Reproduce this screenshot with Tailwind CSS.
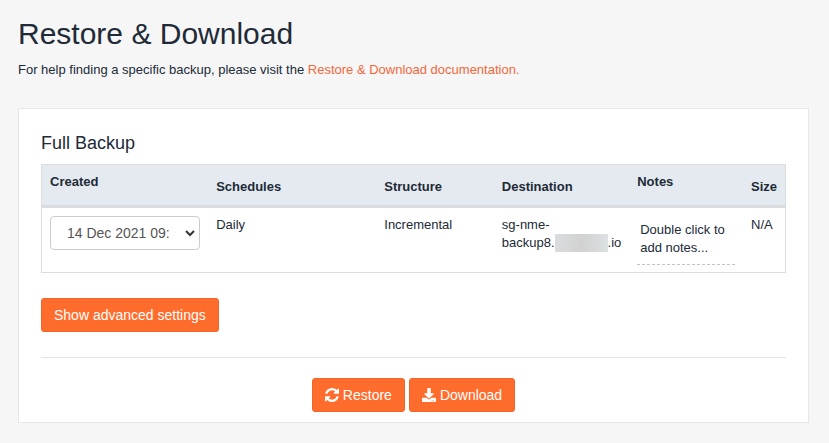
<!doctype html>
<html lang="en">
  <head>
    <meta charset="UTF-8" />
    <meta name="viewport" content="width=device-width, initial-scale=1.0" />
    <script src="https://cdn.jsdelivr.net/npm/@tailwindcss/browser@4"></script>
    <title>Restore &amp; Download</title>
  </head>
  <body
    class="min-h-screen bg-[#f6f6f6] pt-4 pr-5 pb-5 pl-[18px] font-['Liberation_Sans',Arial,sans-serif] text-[13px] leading-[18px] text-[#212a37]"
  >
    <h1 class="text-[30px] leading-9">Restore &amp; Download</h1>
    <p class="mt-[9px]">
      For help finding a specific backup, please visit the
      <a href="#" class="text-[#f4673a] hover:underline"
        >Restore &amp; Download documentation.</a
      >
    </p>

    <main class="mt-[29px] border border-[#e7e7e7] bg-white px-[22px] pt-6 pb-2.5">
      <h2 class="text-lg leading-5">Full Backup</h2>

      <table
        class="mt-[11px] w-full table-fixed border-collapse border border-[#dddddd] text-left"
      >
        <colgroup>
          <col class="w-[22.4%]" />
          <col class="w-[22.6%]" />
          <col class="w-[15.8%]" />
          <col class="w-[18.2%]" />
          <col class="w-[15.3%]" />
          <col class="w-[5.7%]" />
        </colgroup>
        <thead class="bg-[#e5eaf0]">
          <tr class="h-[42px] border-b-3 border-[#dadcdf]">
            <th class="px-2 pt-2 align-top"><label for="created">Created</label></th>
            <th class="px-2 pt-1">Schedules</th>
            <th class="px-2 pt-1">Structure</th>
            <th class="px-2 pt-1">Destination</th>
            <th class="px-2 pt-2 align-top">Notes</th>
            <th class="px-2 pt-1">Size</th>
          </tr>
        </thead>
        <tbody>
          <tr class="align-top">
            <td class="px-2 pt-2 pb-[7px]">
              <div class="relative">
                <select
                  id="created"
                  class="h-[34px] w-full appearance-none rounded border border-[#cccccc] bg-white pr-7 pl-4 text-sm text-[#555555]"
                >
                  <option>14 Dec 2021 09:</option>
                </select>
                <svg
                  class="pointer-events-none absolute top-[14px] right-[5px] h-[7px] w-[10px]"
                  viewBox="0 0 10 7"
                  fill="none"
                  stroke="#333333"
                  stroke-width="2"
                >
                  <path d="M1 1l4 4 4-4" />
                </svg>
              </div>
            </td>
            <td class="px-2 pt-2 pb-[7px]">Daily</td>
            <td class="px-2 pt-2 pb-[7px]">Incremental</td>
            <td class="px-2 pt-2 pb-[7px] whitespace-nowrap">
              sg-nme-<br />backup8.<span
                class="inline-block h-[18px] w-[53px] bg-linear-to-r from-[#dadddf] via-[#d1d1d1] to-[#dce1e3] align-bottom"
              ></span
              >.io
            </td>
            <td class="px-2 pt-2 pb-[7px]">
              <div class="border-b border-dashed border-[#c4c4c4] px-[3px] pt-[5px] pb-[7px]">
                Double click to add notes...
              </div>
            </td>
            <td class="px-2 pt-2 pb-[7px]">N/A</td>
          </tr>
        </tbody>
      </table>

      <button
        type="button"
        class="mt-[25px] h-[34px] rounded-[3px] border border-[#f4642a] bg-[#ff6c2c] px-3 text-sm text-white"
      >
        Show advanced settings
      </button>

      <hr class="mt-[25px] border-[#e4e4e4]" />

      <div class="mt-5 flex justify-center gap-1">
        <button
          type="button"
          class="flex h-[34px] items-center gap-1 rounded-[3px] border border-[#f4642a] bg-[#ff6c2c] px-3 text-sm text-white"
        >
          <svg class="h-[14px] w-[14px]" viewBox="0 0 1536 1536" fill="currentColor">
            <path
              d="M1511 928q0 5-1 7-64 268-268 434.500T764 1536q-146 0-282.500-55T238 1324l-129 129q-19 19-45 19t-45-19-19-45V960q0-26 19-45t45-19h448q26 0 45 19t19 45-19 45l-137 137q71 66 161 102t187 36q134 0 250-65t186-179q11-17 53-117 8-23 30-23h192q13 0 22.500 9.500t9.500 22.500zm25-800v448q0 26-19 45t-45 19h-448q-26 0-45-19t-19-45 19-45l138-138Q969 256 768 256q-134 0-250 65T332 500q-11 17-53 117-8 23-30 23H50q-13 0-22.500-9.500T18 608v-7q65-268 270-434.500T768 0q146 0 284 55.500T1297 212l130-129q19-19 45-19t45 19 19 45z"
            />
          </svg>
          Restore
        </button>
        <button
          type="button"
          class="flex h-[34px] items-center gap-1 rounded-[3px] border border-[#f4642a] bg-[#ff6c2c] px-3 text-sm text-white"
        >
          <svg class="h-[14px] w-[14px]" viewBox="0 0 512 512" fill="currentColor">
            <path
              d="M216 0h80c13.300 0 24 10.700 24 24v168h87.700c17.800 0 26.700 21.500 14.100 34.100L269.700 378.300c-7.500 7.500-19.800 7.500-27.300 0L90.100 226.100c-12.600-12.600-3.700-34.100 14.100-34.100H192V24c0-13.300 10.700-24 24-24zm296 376v112c0 13.300-10.700 24-24 24H24c-13.300 0-24-10.700-24-24V376c0-13.300 10.700-24 24-24h146.700l49 49c20.100 20.100 52.500 20.100 72.600 0l49-49H488c13.300 0 24 10.700 24 24zm-124 88c0-11-9-20-20-20s-20 9-20 20 9 20 20 20 20-9 20-20zm64 0c0-11-9-20-20-20s-20 9-20 20 9 20 20 20 20-9 20-20z"
            />
          </svg>
          Download
        </button>
      </div>
    </main>
  </body>
</html>
